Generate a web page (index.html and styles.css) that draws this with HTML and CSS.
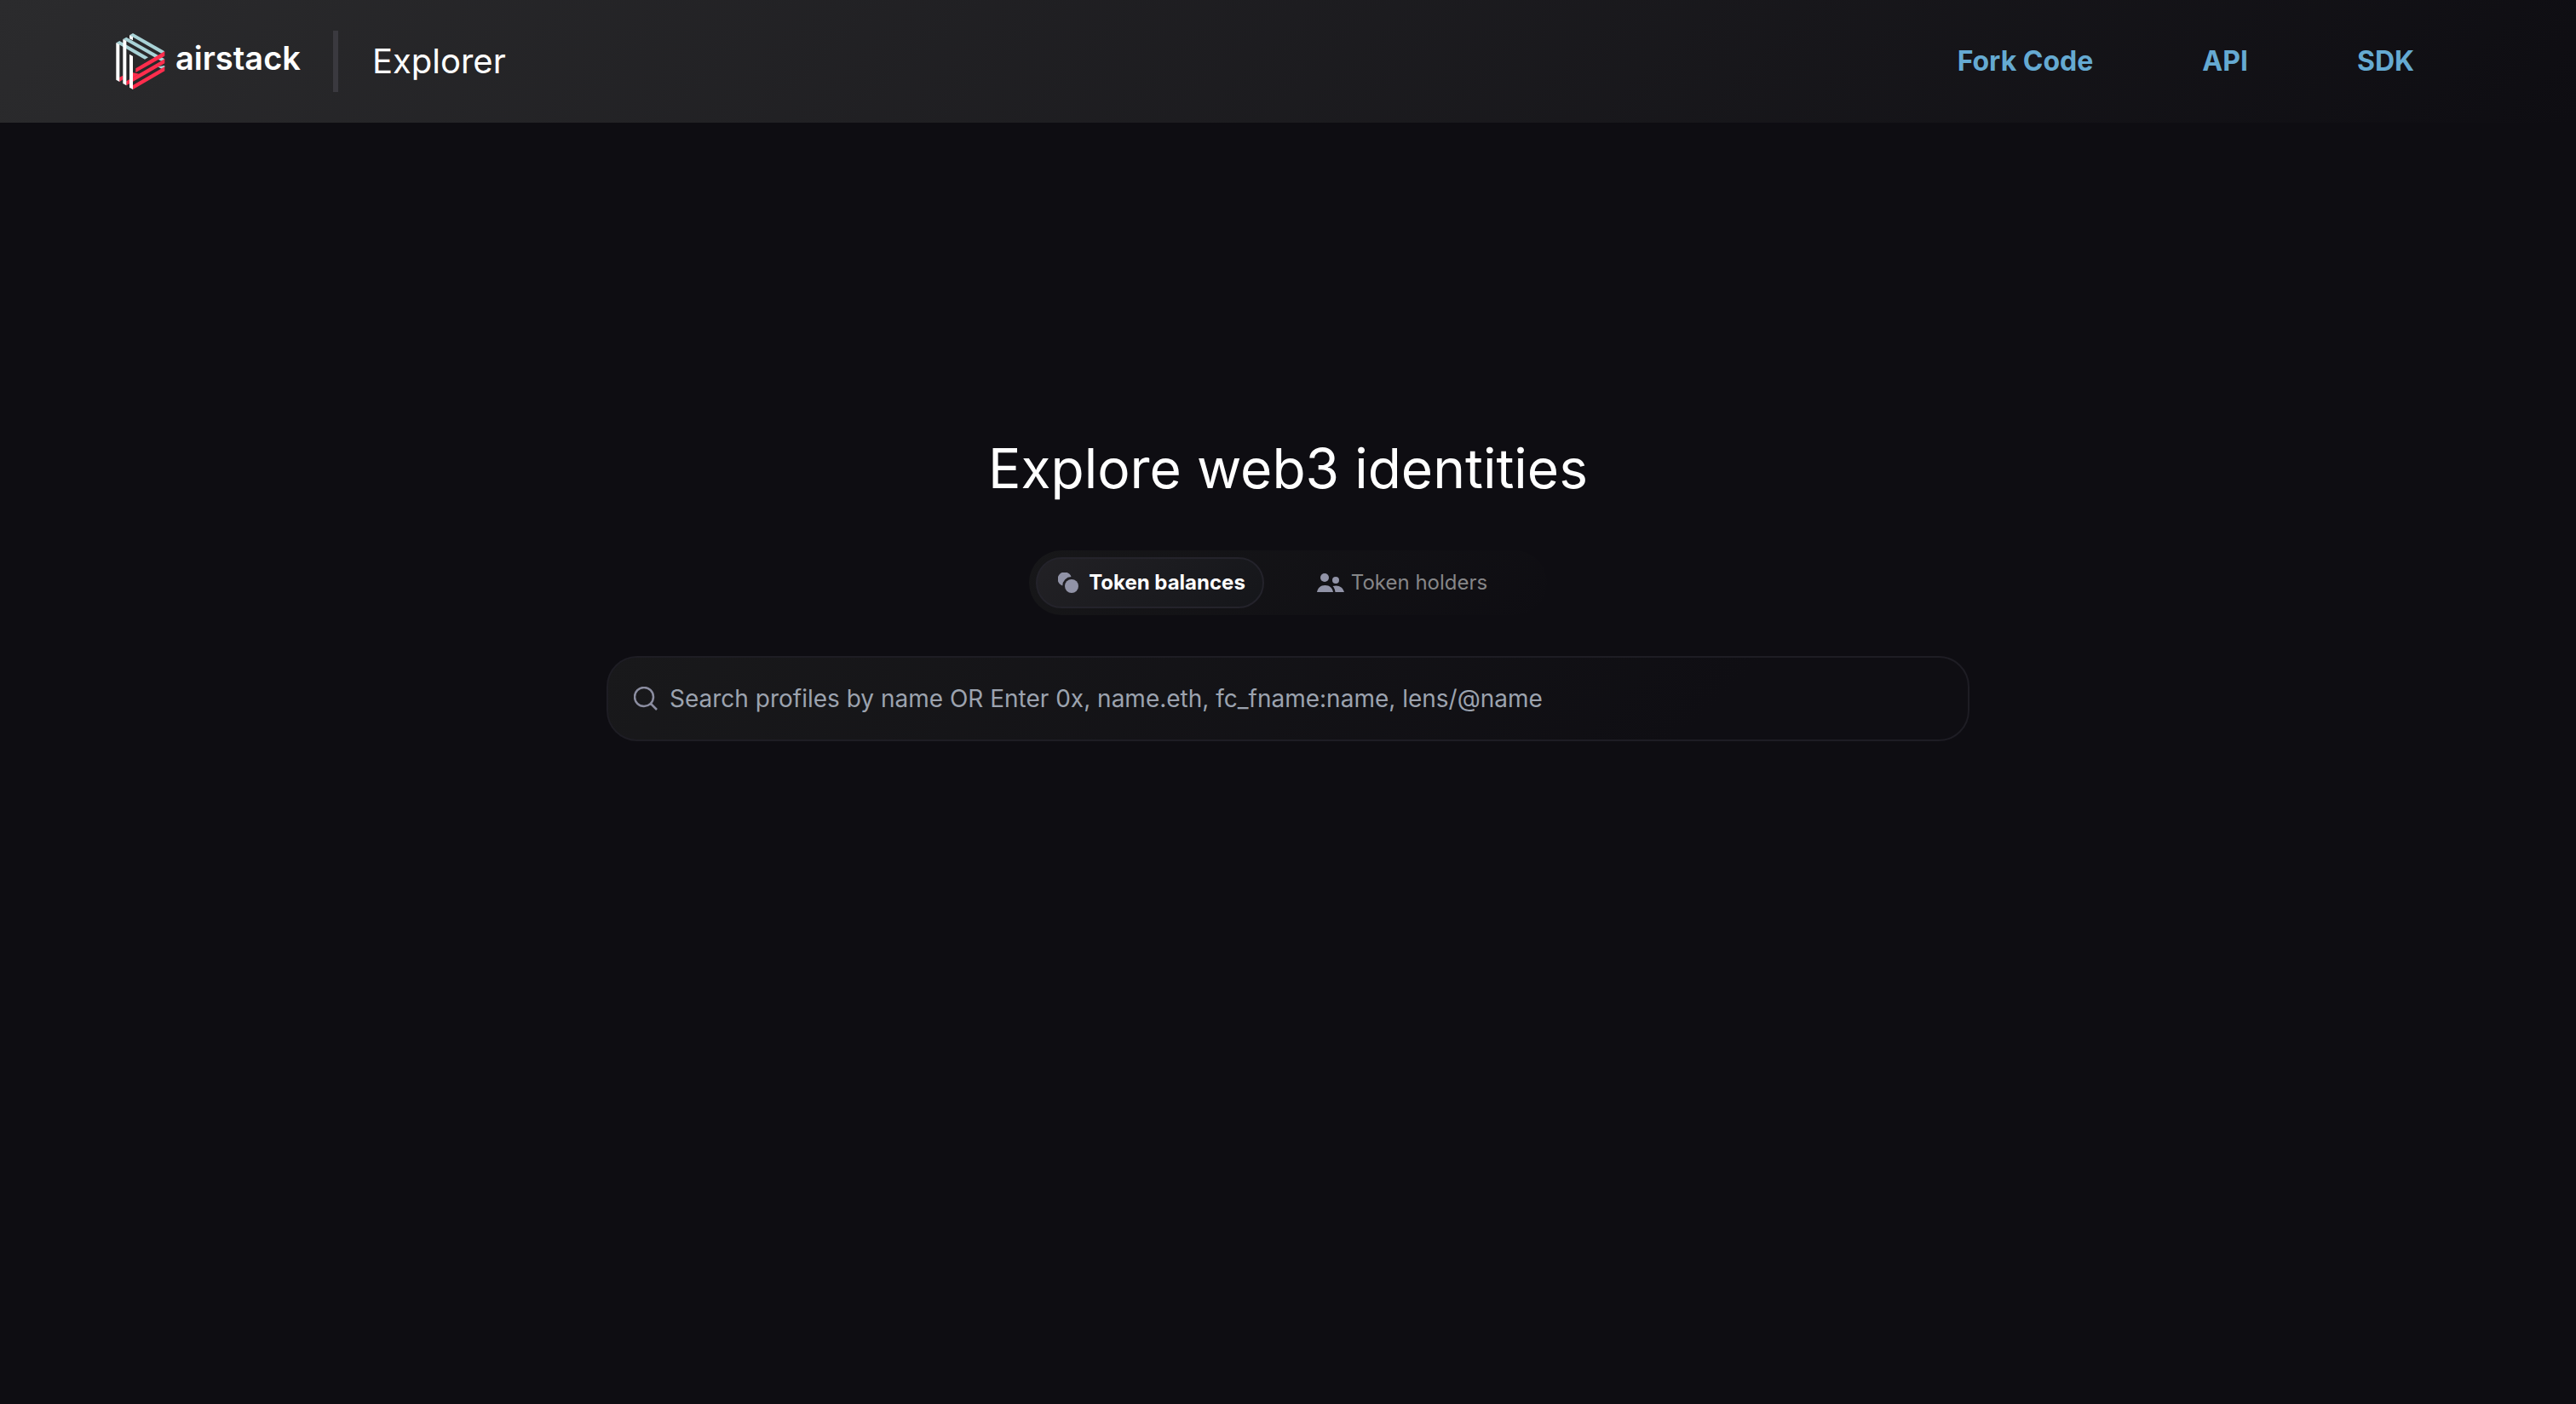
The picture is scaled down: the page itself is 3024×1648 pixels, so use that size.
FILE: index.html
```html
<!DOCTYPE html>
<html lang="en">
<head>
<meta charset="utf-8">
<meta name="viewport" content="width=device-width, initial-scale=1">
<title>Airstack Explorer</title>
<link rel="stylesheet" href="styles.css">
</head>
<body>
<header class="header">
  <div class="brand">
    <a class="logo" href="#">
      <svg class="logo-mark" viewBox="48 57 172 198" aria-hidden="true">
        <g fill="#a9d3d7">
          <path d="M95 64L107 57L219 121L207 128Z"/>
          <path d="M72 78L84 71L219 148L207 155Z"/>
          <path d="M195 175L219 171V176L207 182Z"/>
          <path d="M48 91L60 84L161 142L149 149Z"/>
        </g>
        <g fill="#ff2d4d">
          <path d="M117 181L219 121V137L117 195Z"/>
          <path d="M60 212L72 206V220L60 228Z"/>
          <path d="M84 226L219 148V163L84 241Z"/>
          <path d="M107 213L129 200L107 196Z"/>
          <path d="M107 240L219 175V190L107 255Z"/>
        </g>
        <g fill="#fff">
          <path d="M48 91L60 97V228L48 221Z"/>
          <path d="M72 78L84 84V241L72 234Z"/>
          <path d="M95 64L107 70V82L95 76Z"/>
          <path d="M95 131L107 138V255L95 248Z"/>
        </g>
      </svg>
      <span class="logo-name">airstack</span>
    </a>
    <span class="divider"></span>
    <span class="product">Explorer</span>
  </div>
  <nav class="nav">
    <a href="#">Fork Code</a>
    <a href="#">API</a>
    <a href="#">SDK</a>
  </nav>
</header>
<main class="main">
  <h1 class="title">Explore web3 identities</h1>
  <div class="tabs">
    <button class="tab tab-active" type="button">
      <svg class="icon-coins" viewBox="0 0 24 24" aria-hidden="true">
        <path d="M15.500 5A8.200 8.200 0 1 0 5.300 15.500A10.400 10.400 0 0 1 15.500 5Z"/>
        <circle cx="16" cy="16" r="8"/>
      </svg>
      Token balances
    </button>
    <button class="tab" type="button">
      <svg class="icon-people" viewBox="0 0 32 22" aria-hidden="true">
        <circle cx="9" cy="5" r="5"/>
        <circle cx="22" cy="8" r="4"/>
        <path d="M0 22C1 17 4 14 9.500 14S18 17 19 22Z"/>
        <path d="M18.500 15C25 13 30.500 16 32 22H21.500C21 19 20.500 17 18.500 15Z"/>
      </svg>
      Token holders
    </button>
  </div>
  <form class="search">
    <svg class="icon-search" viewBox="0 0 28 28" aria-hidden="true">
      <circle cx="12" cy="12" r="11"/>
      <path d="M20 20L27 27"/>
    </svg>
    <input class="search-input" type="text" aria-label="Search profiles" placeholder="Search profiles by name OR Enter 0x, name.eth, fc_fname:name, lens/@name">
  </form>
</main>
</body>
</html>
```
FILE: styles.css
```css
* {
  box-sizing: border-box;
}

body {
  margin: 0;
  min-height: 100vh;
  background: #0e0d12;
  color: #fff;
  font-family: Inter, "Liberation Sans", sans-serif;
}

a {
  color: inherit;
  text-decoration: none;
}

.header {
  display: flex;
  align-items: center;
  justify-content: space-between;
  height: 144px;
  padding: 0 190px 0 136px;
  background: linear-gradient(137deg, #2b2b2d 0%, #0e0d12 100%);
}

.brand,
.logo {
  display: flex;
  align-items: center;
}

.logo {
  gap: 12px;
}

.logo-mark {
  width: 58px;
  height: 66px;
}

.logo-name {
  padding-bottom: 8px;
  font-size: 38px;
  font-weight: 600;
  line-height: 48px;
}

.divider {
  width: 6px;
  height: 72px;
  margin: 0 40px 0 38px;
  background: #3a393f;
}

.product {
  font-size: 40px;
  line-height: 48px;
}

.nav {
  display: flex;
  gap: 128px;
  color: #65aad2;
  font-size: 32px;
  font-weight: 700;
  line-height: 40px;
}

.main {
  display: flex;
  flex-direction: column;
  align-items: center;
  padding: 366px 48px 48px;
}

.title {
  margin: 0;
  font-size: 64px;
  font-weight: 400;
  line-height: 80px;
}

.tabs {
  display: flex;
  width: 608px;
  height: 76px;
  margin: 56px 0 48px;
  padding: 8px;
  border-radius: 38px;
  background: linear-gradient(137deg, #171719 0%, #0e0d12 100%);
}

.tab {
  display: flex;
  flex: 1 1 0;
  align-items: center;
  justify-content: center;
  gap: 8px;
  padding: 0;
  border: 2px solid transparent;
  border-radius: 30px;
  background: none;
  color: #868688;
  font: 400 24px/32px Inter, "Liberation Sans", sans-serif;
}

.tab svg {
  fill: #9193a7;
}

.tab-active {
  flex: 0 0 268px;
  gap: 12px;
  padding-left: 4px;
  border-color: #24232b;
  background: linear-gradient(137deg, #222125 0%, #15161a 100%);
  color: #fff;
  font-weight: 700;
}

.icon-coins {
  width: 24px;
  height: 24px;
}

.icon-people {
  width: 32px;
  height: 22px;
}

.search {
  display: flex;
  align-items: center;
  gap: 14px;
  width: 100%;
  max-width: 1600px;
  height: 100px;
  padding: 0 30px;
  border: 2px solid #1e1d24;
  border-radius: 36px;
  background: linear-gradient(137deg, #19191b 0%, #0f0e13 80%);
}

.icon-search {
  flex: none;
  width: 28px;
  height: 28px;
  fill: none;
  stroke: #8b8da0;
  stroke-width: 2.5;
}

.search-input {
  flex: 1;
  min-width: 0;
  padding: 0;
  border: 0;
  outline: 0;
  background: none;
  color: #fff;
  font: 400 28px/40px Inter, "Liberation Sans", sans-serif;
}

.search-input::placeholder {
  color: #9ca3af;
  opacity: 1;
}
```
